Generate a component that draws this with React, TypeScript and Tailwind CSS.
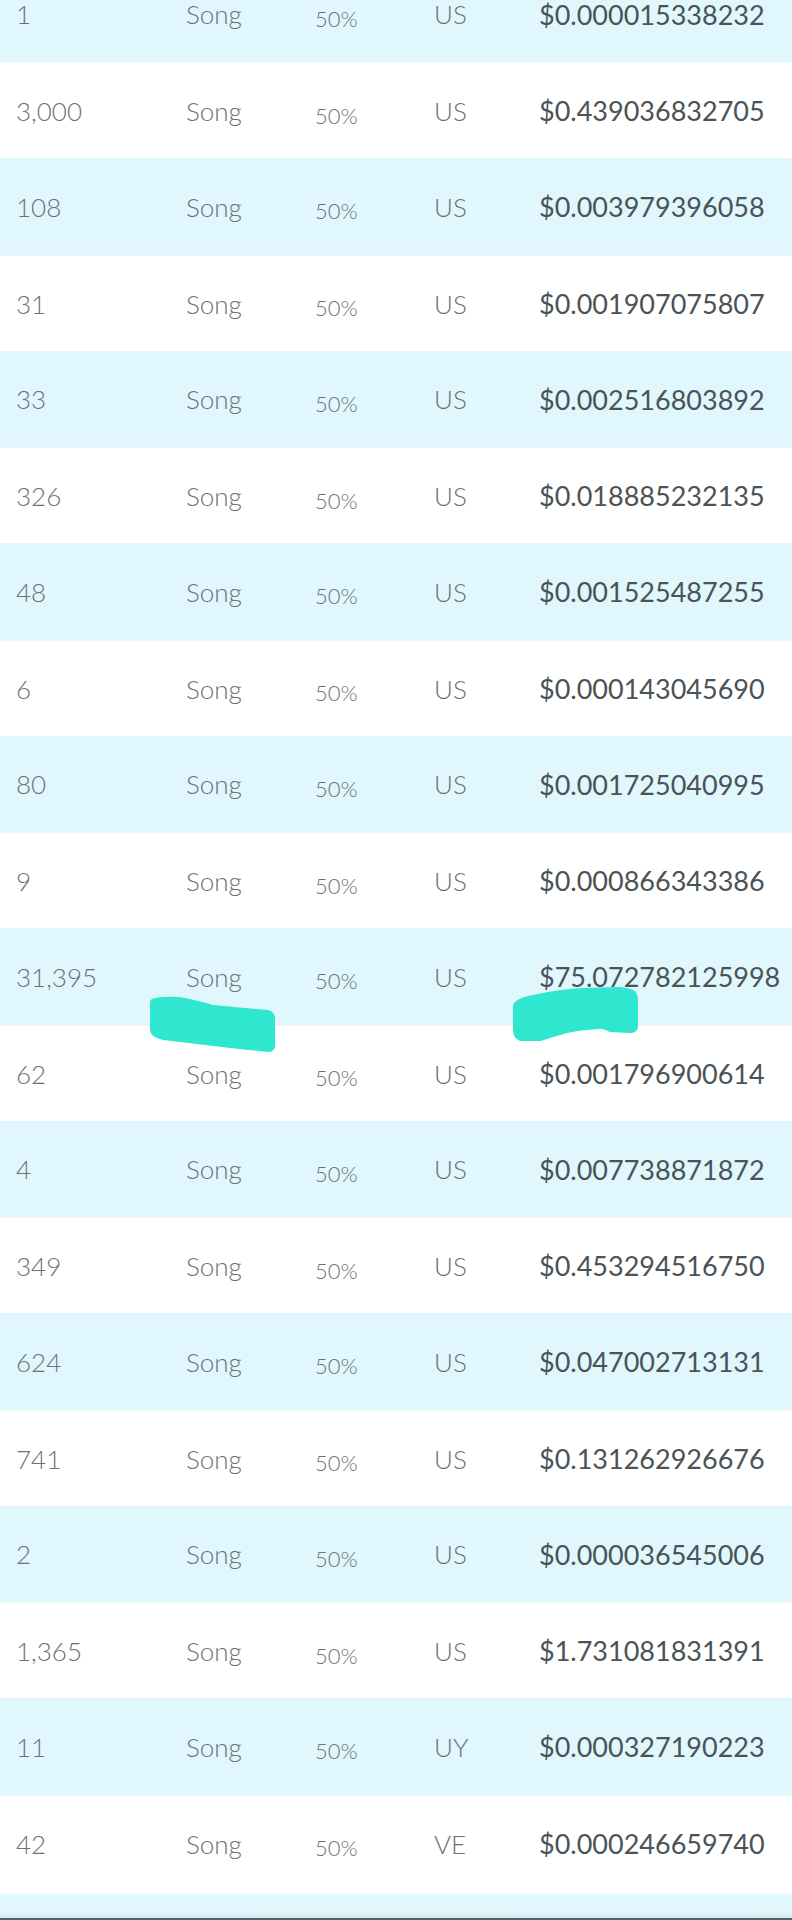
import React from "react";

const rows: [string, string, string][] = [
  ["1", "US", "$0.000015338232"],
  ["3,000", "US", "$0.439036832705"],
  ["108", "US", "$0.003979396058"],
  ["31", "US", "$0.001907075807"],
  ["33", "US", "$0.002516803892"],
  ["326", "US", "$0.018885232135"],
  ["48", "US", "$0.001525487255"],
  ["6", "US", "$0.000143045690"],
  ["80", "US", "$0.001725040995"],
  ["9", "US", "$0.000866343386"],
  ["31,395", "US", "$75.072782125998"],
  ["62", "US", "$0.001796900614"],
  ["4", "US", "$0.007738871872"],
  ["349", "US", "$0.453294516750"],
  ["624", "US", "$0.047002713131"],
  ["741", "US", "$0.131262926676"],
  ["2", "US", "$0.000036545006"],
  ["1,365", "US", "$1.731081831391"],
  ["11", "UY", "$0.000327190223"],
  ["42", "VE", "$0.000246659740"],
];

export default function App() {
  return (
    <div
      className="relative h-[1920px] w-[792px] overflow-hidden bg-white"
      style={{ fontFamily: "Lato, 'Open Sans', sans-serif" }}
    >
      <div className="mt-[-34.25px] flex flex-col">
        {rows.map(([n, c, amt], i) => (
          <div
            key={i}
            className={`flex h-[96.25px] items-center pl-[16px] pt-[2px] ${
              i % 2 === 0 ? "bg-[#e0f8fd]" : "bg-white border-t border-[#f1f6f7]"
            }`}
          >
            <div className="w-[170px] text-[26px] font-light text-[#687378]">{n}</div>
            <div className="w-[129px] text-[26px] font-light text-[#687378]">Song</div>
            <div className="w-[119px] pt-[7px] text-[22px] font-light text-[#687378]">50%</div>
            <div className="w-[105px] text-[26px] font-light text-[#687378]">{c}</div>
            <div className="whitespace-nowrap text-[27px] font-normal text-[#4a5358]">{amt}</div>
          </div>
        ))}
        <div className="flex h-[30px] flex-col">
          <div className="h-[5px] bg-gradient-to-b from-white to-[#e0f8fd]" />
          <div className="flex-1 bg-[#e0f8fd]" />
          <div className="h-[6px] bg-gradient-to-b from-[#e0f8fd] to-[#d3e9ec]" />
          <div className="h-[3px] bg-[#53656b]" />
        </div>
      </div>
      <svg
        className="pointer-events-none absolute left-0 top-0"
        width="792"
        height="1920"
        viewBox="0 0 792 1920"
      >
        <path
          d="M152 999 Q160 996 180 997 Q200 1001 213 1005 L268 1010 Q275 1012 275 1018 L275 1046 Q274 1052 268 1052 L230 1048 L163 1040 Q150 1037 150 1030 L150 1005 Q150 999 152 999 Z"
          fill="#2fe6cf"
        />
        <path
          d="M515 1002 Q520 997 533 995 Q560 989 583 988 L620 987 Q632 988 636 992 Q638 996 638 1002 L638 1027 Q637 1033 630 1033 L610 1032 Q602 1028 598 1029 Q580 1030 567 1033 Q550 1038 540 1041 L520 1041 Q513 1038 513 1030 L513 1008 Q513 1004 515 1002 Z"
          fill="#2fe6cf"
        />
      </svg>
    </div>
  );
}
